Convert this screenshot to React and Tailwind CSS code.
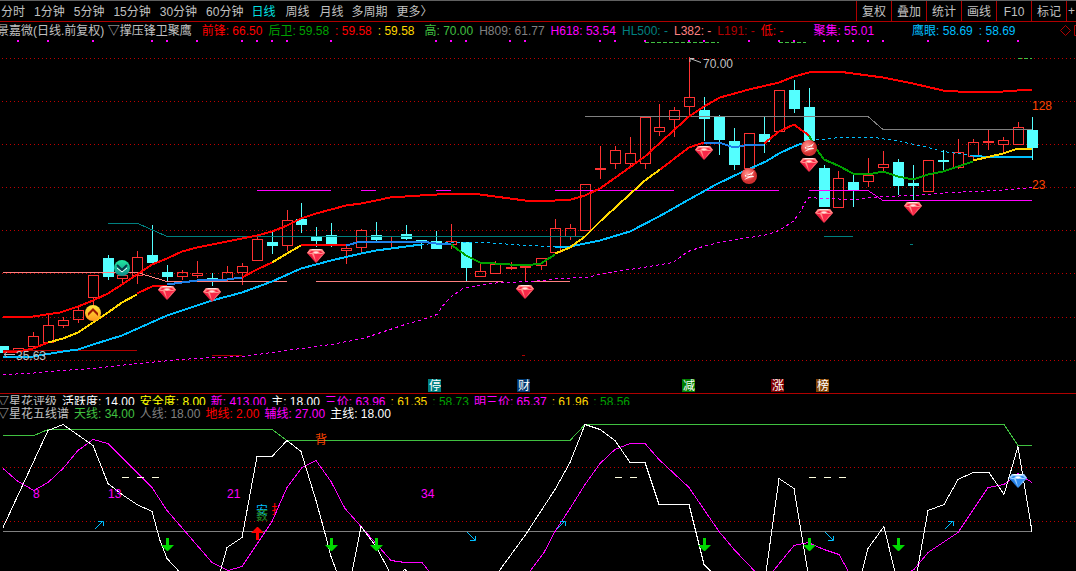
import React from 'react';

const PERIODS = [
    ['分时', '1分钟', '5分钟', '15分钟', '30分钟', '60分钟'],
    ['日线', '周线', '月线'],
    ['多周期', '更多〉'],
];

const TOOLS = ['复权', '叠加', '统计', '画线', 'F10', '标记'];

// [text, classes]
const MAIN_LEGEND = [
    ['前锋: 66.50', 'text-[#ff0000] ml-1'],
    ['后卫: 59.58', 'text-[#00a000]'],
    [': 59.58', 'text-[#ff0000]'],
    [': 59.58', 'text-[#ffd700]'],
    ['高: 70.00', 'text-[#40c040] ml-1'],
    ['H809: 61.77', 'text-[#808080]'],
    ['H618: 53.54', 'text-[#ff00ff]'],
    ['HL500: -', 'text-[#008080]'],
    ['L382: -', 'text-[#ff8080]'],
    ['L191: -', 'text-[#b00000]'],
    ['低: -', 'text-[#ff0000]'],
    ['聚集: 55.01', 'text-[#ff00ff] ml-6'],
    ['鹰眼: 58.69', 'text-[#00bfff] ml-8'],
    [': 58.69', 'text-[#00bfff]'],
];

const RATING_LEGEND = [
    ['活跃度: 14.00', 'text-[#ffffff]'],
    ['安全度: 8.00', 'text-[#ffff00]'],
    ['新: 413.00', 'text-[#ff00ff]'],
    ['主: 18.00', 'text-[#ffffff]'],
    ['三价: 63.96', 'text-[#ff00ff]'],
    [': 61.35', 'text-[#ffd700]'],
    [': 58.73', 'text-[#00a000]'],
    ['明三价: 65.37', 'text-[#ff00ff]'],
    [': 61.96', 'text-[#ffd700]'],
    [': 58.56', 'text-[#00a000]'],
];

const FIVE_LINE_LEGEND = [
    ['天线: 34.00', 'text-[#40c040]'],
    ['人线: 18.00', 'text-[#808080]'],
    ['地线: 2.00', 'text-[#ff0000]'],
    ['辅线: 27.00', 'text-[#ff00ff]'],
    ['主线: 18.00', 'text-[#ffffff]'],
];

// [x, high, open/close top, open/close bottom, low, up]
const CANDLES = [
    [3, 346, 346, 353, 353, 0], [18, 348, 348, 350, 350, 1], [33, 332, 336, 346, 346, 1],
    [48, 315, 325, 342, 342, 1], [63, 317, 320, 325, 328, 1], [78, 307, 310, 319, 323, 1],
    [93, 275, 275, 297, 307, 1], [108, 255, 258, 277, 280, 0], [122, 270, 275, 278, 283, 1],
    [137, 251, 257, 275, 284, 1], [152, 225, 255, 263, 264, 0], [167, 265, 272, 277, 282, 0],
    [182, 270, 272, 276, 280, 1], [197, 261, 273, 275, 278, 1], [212, 273, 278, 279, 286, 0],
    [227, 266, 272, 279, 282, 1], [242, 263, 266, 272, 285, 1], [257, 236, 239, 260, 260, 1],
    [272, 232, 242, 246, 254, 0], [287, 210, 220, 245, 251, 1], [301, 203, 219, 225, 233, 0],
    [316, 227, 237, 241, 247, 0], [331, 223, 235, 244, 247, 0], [346, 245, 248, 250, 264, 1],
    [361, 229, 230, 247, 252, 1], [376, 222, 235, 240, 241, 0], [391, 237, 241, 242, 249, 1],
    [406, 225, 234, 239, 240, 0], [421, 240, 240, 241, 249, 0], [436, 231, 241, 249, 249, 0],
    [451, 224, 241, 244, 249, 1], [466, 242, 242, 268, 281, 0], [480, 263, 271, 276, 276, 1],
    [495, 261, 264, 273, 273, 1], [511, 262, 267, 268, 270, 1], [525, 266, 266, 267, 282, 1],
    [541, 258, 258, 265, 270, 1], [555, 219, 228, 252, 252, 1], [570, 224, 228, 236, 240, 1],
    [585, 184, 184, 230, 230, 1], [600, 146, 168, 169, 179, 1], [615, 146, 150, 163, 169, 1],
    [630, 137, 153, 163, 167, 1], [645, 117, 117, 163, 169, 1], [659, 104, 127, 131, 136, 1],
    [674, 107, 110, 119, 137, 1], [689, 57, 97, 106, 115, 1], [704, 97, 110, 119, 141, 0],
    [719, 115, 117, 140, 155, 0], [734, 128, 141, 165, 170, 0], [749, 133, 133, 168, 168, 1],
    [764, 117, 134, 142, 153, 0], [779, 90, 90, 131, 131, 1], [794, 80, 90, 109, 113, 0],
    [809, 88, 107, 141, 156, 0], [824, 165, 168, 207, 207, 0], [838, 171, 178, 207, 207, 1],
    [853, 175, 182, 190, 207, 0], [868, 158, 175, 181, 187, 1], [883, 151, 164, 167, 171, 1],
    [898, 159, 162, 186, 195, 0], [913, 165, 183, 186, 200, 0], [928, 160, 160, 191, 191, 1],
    [943, 150, 160, 162, 171, 0], [958, 139, 152, 167, 169, 1], [973, 139, 142, 156, 160, 1],
    [988, 130, 141, 142, 150, 1], [1003, 137, 140, 144, 152, 1], [1018, 122, 127, 144, 144, 1],
    [1032, 117, 130, 148, 160, 0],
];

const SIGNAL_DOTS = [
    18, 48, 93, 152, 167, 197, 242, 257, 272, 287, 331, 436, 451, 466, 510, 525, 600, 615, 645, 689, 704,
    749, 779, 794, 824, 838, 853, 868, 883, 928, 988, 1018,
];

// thin horizontal levels
const LEVELS = [
    ['#b00000', '3,350 137,350'],
    ['#b00000', '212,355 242,355'],
    ['#b00000', '522,355 525,355'],
    ['#ff8080', '3,272 137,272 167,281 287,281'],
    ['#ff8080', '316,281 503,281'],
    ['#ff8080', '533,281 570,281'],
    ['#008080', '108,223 138,223 167,236 585,236'],
    ['#008080', '824,236 853,236'],
    ['#008080', '910,244 913,244'],
    ['#808080', '585,116 868,116 883,129 1032,129'],
    ['#ff00ff', '257,190 331,190'],
    ['#ff00ff', '361,190 376,190'],
    ['#ff00ff', '436,190 451,190'],
    ['#ff00ff', '555,190 674,190'],
    ['#ff00ff', '706,190 779,190'],
    ['#ff00ff', '809,190 868,190 883,200 1032,200'],
];

const RAIL = '#00bfff';
const THICK_LINES = [
    ['#ff0000', '3,317 33,316 60,312 78,306 93,300 108,293 122,284 137,274 152,264 167,258 182,251 197,247 227,241 257,235 272,231 287,225 301,218 316,213 331,209 346,205 361,203 376,200 390,197 420,195 455,193 480,194 510,198 525,200 555,200 571,199 585,195 600,188 645,156 689,116 704,106 720,97 749,89 779,82 794,76 809,72 838,71 868,75 883,77 913,83 943,90 958,91 1003,91 1032,89'],
    [RAIL, '3,357 33,356 63,351 78,349 93,344 122,335 167,315 212,300 242,292 272,281 301,268 331,260 361,253 376,250 406,246 421,244'],
    [RAIL, '555,246 570,246 600,240 630,231 659,216 689,199 716,184 741,172 766,161 779,153 794,146 802,143'],
    [RAIL, '973,155 982,156 1032,156'],
    ['#ff0000', '3,352 18,351 33,348 48,342'],
    ['#ffd700', '48,342 63,338 78,332 93,322 108,312 122,302 137,294'],
    ['#ff0000', '137,293 152,286 167,285'],
    ['#1e80e8', '167,284 182,282 197,280 227,279 242,277'],
    ['#ff0000', '242,277 257,269 272,262'],
    ['#ffd700', '272,262 287,253 301,245'],
    ['#ff0000', '301,245 325,244 346,245'],
    ['#1e80e8', '346,245 361,241 421,241 436,243 451,244'],
    ['#00a000', '451,244 466,255 480,262 495,263 525,265 541,263 555,254'],
    ['#ffd700', '555,253 570,247 585,236 600,221 623,200 645,180 660,169'],
    ['#ff0000', '660,169 689,147 704,142'],
    ['#1e80e8', '704,142 719,142 734,147 749,144 764,144'],
    ['#ff0000', '764,143 779,131 794,124 809,135'],
    ['#00a000', '809,135 816,148 824,159 838,165 853,173 868,174 883,171 898,176 913,179 928,174 943,171 958,166 973,161'],
    ['#ffd700', '973,160 1003,153 1018,148 1032,148'],
];

const DASHED_LINES = [
    [RAIL, '421,244 451,242 480,242 500,243 525,245 555,246'],
    [RAIL, '810,140 840,137 875,137 900,141 928,147 943,151 973,155'],
    ['#ff00ff', '3,374 30,373 48,371 93,368 137,363 182,359 212,357 242,356 272,352 301,348 331,344 363,338 405,324 420,320 437,314 443,305 450,297 463,288 477,285 500,282 533,281 560,278 587,277 603,273 643,267 673,262 688,251 703,246 719,242 768,234 779,230 793,221 801,210 805,202 809,197 823,198 854,199 883,196 916,195 949,192 999,190 1032,187'],
];

const GEMS = [[167, 286], [212, 288], [316, 249], [525, 285], [704, 146], [809, 158], [824, 209], [913, 202]];

const BADGES = [
    [428, '停', '#008080'],
    [517, '财', '#003870'],
    [682, '减', '#008000'],
    [771, '涨', '#800000'],
    [816, '榜', '#804000'],
];

const MAIN_WAVE = [
    '3,527 48,430 63,424 93,445 108,483 122,494 137,504 152,511 160,540 167,558 180,572',
    '220,572 227,547 242,537 257,456 272,456 287,440 301,451 316,500 325,533 331,556 337,572',
    '352,572 361,526 376,546 390,572',
    '401,572 405,569 408,572',
    '498,572 525,535 555,489 570,462 585,424 600,429 615,440 630,462 645,462 659,504 689,504 704,564 712,572',
    '766,572 779,478 794,488 808,572',
    '862,572 868,548 884,526 895,572',
    '917,572 928,510 944,504 958,479 973,472 989,472 1004,494 1018,446 1032,531',
];

const AUX_WAVE = [
    '3,468 18,481 34,490 48,482 63,468 78,450 93,439 108,443 152,487 167,510 212,562 228,570 242,566 272,521 287,487 302,467 316,460 331,481 345,508 361,526 391,560 405,562 422,562 430,572',
    '529,572 544,552 555,531 570,508 585,484 600,463 615,449 630,443 645,443 659,459 689,487 719,531 735,550 756,572',
    '772,572 794,545 808,542 824,549 839,554 849,572',
    '908,572 914,569 928,552 958,532 988,487 1004,484 1018,473 1032,482',
];

const Grid = ({ rows }) => (
    <g stroke="#c00000" strokeDasharray="1 3">
        {rows.map((y) => (
            <line key={y} x1="2" x2="1076" y1={y + 0.5} y2={y + 0.5} />
        ))}
    </g>
);

const Lines = ({ lines, ...rest }) => (
    <g fill="none" shapeRendering="crispEdges" {...rest}>
        {lines.map(([color, points], i) => (
            <polyline key={i} points={points} stroke={color} transform="translate(0 0.5)" />
        ))}
    </g>
);

const Candle = ({ data }) => {
    const [x, high, top, bottom, low, up] = data;
    if (!up) {
        return (
            <g fill="#54ffff">
                <rect x={x} y={high} width="1" height={low - high} />
                <rect x={x - 5} y={top} width="11" height={bottom - top} />
            </g>
        );
    }
    return (
        <g fill="#ff3232">
            <rect x={x} y={high} width="1" height={top - high} />
            <rect x={x} y={bottom} width="1" height={low - bottom} />
            <rect x={x - 4.5} y={top + 0.5} width="10" height={bottom - top} fill="none" stroke="#ff3232" />
        </g>
    );
};

const Gem = ({ x, y, blue }) => {
    const c = blue ? ['#2f8cf0', '#9fd0ff', '#ffffff', '#1a66c8'] : ['#f82848', '#ff8c88', '#ffe0e0', '#c81030'];
    return (
        <g transform={`translate(${x - 9} ${y})`}>
            <path d="M3 0H15L18 4L9 14L0 4Z" fill={c[0]} />
            <path d="M3 0H15L18 4L15 5H3L0 4Z" fill={c[1]} />
            <path d="M4 0H14L13 1H5ZM6 3.5L9 2.5L12 3.5L9 4.5Z" fill={c[2]} />
            <path d="M4 2H7L5 4H2ZM14 2H11L13 4H16Z" fill={c[0]} />
            <path d="M5 5L9 13L7 5Z" fill={c[1]} />
            <path d="M0 4L9 14L4.5 7Z" fill={c[3]} opacity="0.6" />
            <path d="M18 4L9 14L13.5 7Z" fill={c[1]} opacity="0.6" />
        </g>
    );
};

const StruckBall = ({ x, y }) => (
    <g transform={`translate(${x} ${y})`}>
        <circle r="8" fill="url(#ballRed)" />
        <path d="M-5 4Q-3 2 -1 1Q-5 1 -4 -1Q0 -1 5 -5Q4 -2 1 0Q5 -1 5 1Q1 1 -5 4Z" fill="#fff0ec" />
        <path d="M-3 0Q0 0 2 -1" stroke="#e05050" fill="none" />
    </g>
);

const MainChart = () => (
    <svg viewBox="0 39 1076 354" className="block w-full" fontFamily="Liberation Sans, Noto Sans CJK SC, sans-serif" fontSize="12">
        <defs>
            <radialGradient id="ballRed" cx="40%" cy="35%">
                <stop offset="0" stopColor="#ff9890" />
                <stop offset="0.6" stopColor="#f05858" />
                <stop offset="1" stopColor="#d03030" />
            </radialGradient>
            <linearGradient id="ballGold" x2="0" y2="1">
                <stop offset="0" stopColor="#ffe838" />
                <stop offset="1" stopColor="#ff9820" />
            </linearGradient>
            <linearGradient id="ballTeal" x2="0" y2="1">
                <stop offset="0" stopColor="#20e8a0" />
                <stop offset="1" stopColor="#108888" />
            </linearGradient>
        </defs>

        <Grid rows={[58, 101, 144, 187, 230, 273, 317, 360]} />
        {SIGNAL_DOTS.map((x) => (
            <rect key={x} x={x - 1} y="40" width="2" height="2" fill="#ff00ff" />
        ))}
        <path d="M645 42.5H719M779 42.5H806M1018 58.5H1032" stroke="#40c040" strokeDasharray="4 2" />

        {CANDLES.map((c) => (
            <Candle key={c[0]} data={c} />
        ))}
        <Lines lines={LEVELS} />
        <Lines lines={DASHED_LINES} strokeDasharray="3 3" />
        <Lines lines={THICK_LINES} strokeWidth="2" />

        {GEMS.map(([x, y]) => (
            <Gem key={x} x={x} y={y} />
        ))}
        <StruckBall x={749} y={176} />
        <StruckBall x={809} y={148} />
        <g transform="translate(93 313)">
            <circle r="8" fill="url(#ballGold)" />
            <path d="M-5 3L0 -2L5 3V0L0 -5L-5 0Z" fill="#a01800" />
        </g>
        <g transform="translate(122 268)">
            <circle r="8" fill="url(#ballTeal)" />
            <path d="M-5 -3L0 2L5 -3" fill="none" stroke="#083848" strokeWidth="2" />
            <path d="M-5 0L0 4L5 0" fill="none" stroke="#ffffff" />
        </g>

        <g stroke="#c0c0c0" fill="none">
            <path d="M690 58.5L701 62.5M690 62V58.5H694" />
            <path d="M4 354.5H15M7 352L4 354.5L7 357" />
        </g>
        <text x="703" y="68" fill="#c0c0c0">70.00</text>
        <text x="16" y="360" fill="#c0c0c0">35.63</text>
        <text x="1032" y="110" fill="#ff4500">128</text>
        <text x="1032" y="189" fill="#ff4500">23</text>

        {BADGES.map(([x, label, color]) => (
            <g key={x}>
                <rect x={x} y="379" width="13" height="13" fill={color} />
                <text x={x + 1} y="390" fill="#ffffff" fontSize="12">{label}</text>
            </g>
        ))}
    </svg>
);

const FiveLineChart = () => (
    <svg viewBox="0 421 1076 150" className="block w-full" fontFamily="Liberation Sans, Noto Sans CJK SC, sans-serif" fontSize="12">
        <Grid rows={[467, 521]} />
        <Lines
            lines={[
                ['#808080', '3,531 1032,531'],
                ['#40c040', '3,435 34,435 48,429 272,429 287,440 570,440 585,424 1004,424 1018,445 1032,445'],
                ...AUX_WAVE.map((p) => ['#ff00ff', p]),
                ...MAIN_WAVE.map((p) => ['#ffffff', p]),
            ]}
        />
        <path
            d="M122 477.5h7m8 0h7m8 0h7M615 477.5h7m8 0h7M809 477.5h7m8 0h7m8 0h7"
            stroke="#ffffe0"
            fill="none"
        />

        <g fill="#ff00ff">
            <text x="33" y="498">8</text>
            <text x="108" y="498">13</text>
            <text x="227" y="498">21</text>
            <text x="421" y="498">34</text>
        </g>
        <text x="315" y="444" fill="#ff4500">背</text>
        <text x="256" y="515" fill="#00bfff">安</text>
        <text x="256" y="520" fill="#208020">薮</text>
        <text x="271" y="514" fill="#ff0000">扌</text>

        {[[95, 529], [557, 529], [945, 529]].map(([x, y]) => (
            <path key={x} transform={`translate(${x} ${y})`} d="M0 0L8 -8M3 -7.500H8.500V-3" stroke={RAIL} fill="none" />
        ))}
        {[[467, 532], [825, 532]].map(([x, y]) => (
            <path key={x} transform={`translate(${x} ${y})`} d="M0 0L8 8M3 8.500H8.500V4" stroke={RAIL} fill="none" />
        ))}
        {[167, 331, 376, 704, 809, 898].map((x) => (
            <path key={x} transform={`translate(${x} 538)`} d="M-1 0H2V7H7L1 13H0L-6 7H-1Z" fill="#00d800" />
        ))}
        <path transform="translate(257 527)" d="M-1 13H2V6H7L1 0H0L-6 6H-1Z" fill="#ff0000" />
        <Gem x={1018} y={474} blue />
    </svg>
);

const Legend = ({ title, items }) => (
    <>
        <span className="-ml-[3px] text-[#c0c0c0]">{title}</span>
        {items.map(([text, cls], i) => (
            <span key={i} className={cls}>{text}</span>
        ))}
    </>
);

export default function App() {
    return (
        <div className="w-full overflow-hidden bg-black font-['Liberation_Sans','Noto_Sans_CJK_SC',sans-serif] text-[12px] leading-[18px] whitespace-nowrap">
            <header className="flex h-[22px] items-stretch justify-between border-t border-b border-t-[#606060] border-b-[#b00000] text-[#c0c0c0]">
                <nav className="flex gap-2 pt-px pl-px">
                    {PERIODS.map((group, i) => (
                        <div key={i} className={i === 1 ? 'flex gap-[10px]' : 'flex gap-[9px]'}>
                            {group.map((p) => (
                                <button key={p} className={p === '日线' ? 'text-[#00e0e0]' : ''}>{p}</button>
                            ))}
                        </div>
                    ))}
                </nav>
                <div className="flex">
                    {TOOLS.map((t) => (
                        <button key={t} className="w-[35px] border-l border-[#b00000] pt-px">{t}</button>
                    ))}
                    <button className="w-[10px] border-l border-[#b00000]">+</button>
                </div>
            </header>

            <section>
                <div className="flex h-[17px] justify-between">
                    <div className="flex gap-[6px]">
                        <Legend title="景嘉微(日线.前复权) ▽撑压锋卫聚鹰" items={MAIN_LEGEND} />
                    </div>
                    <div className="flex items-center gap-[3px] text-[#b00000]">
                        <button aria-label="标注">
                            <svg width="11" height="11" viewBox="0 0 11 11" fill="none" stroke="currentColor">
                                <path d="M5.500 0.500L10.500 5.500L5.500 10.500L0.500 5.500Z" />
                            </svg>
                        </button>
                        <button aria-label="窗口">
                            <svg width="2" height="11" viewBox="0 0 2 11" fill="none" stroke="currentColor">
                                <path d="M2 0.500H0.500V10.500H2" />
                            </svg>
                        </button>
                    </div>
                </div>
                <MainChart />
            </section>

            <section className="border-t border-[#b00000]">
                <div className="flex h-[11px] gap-[5px] overflow-hidden leading-4">
                    <Legend title="▽星花评级" items={RATING_LEGEND} />
                </div>
                <div className="flex h-4 gap-[5px]">
                    <Legend title="▽星花五线谱" items={FIVE_LINE_LEGEND} />
                </div>
                <FiveLineChart />
            </section>
        </div>
    );
}
